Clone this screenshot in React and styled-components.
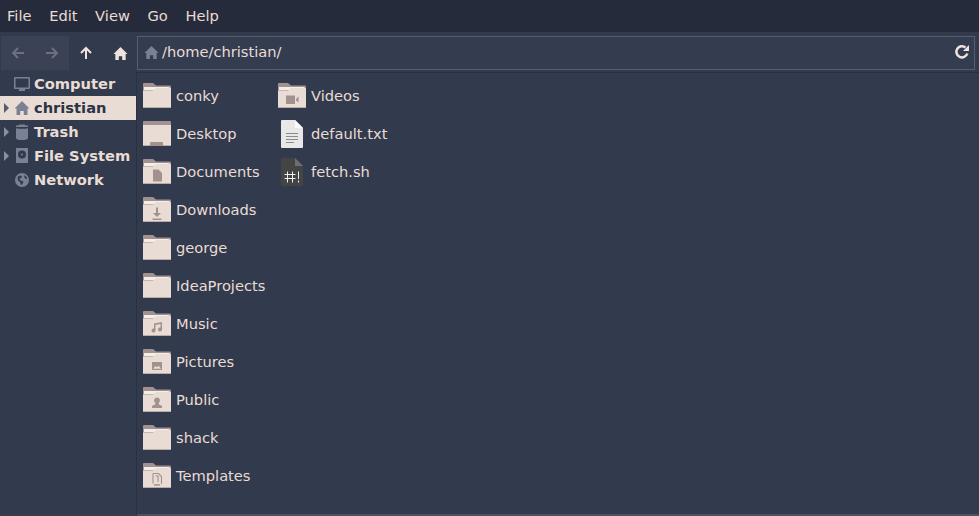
import React from "react";
import styled, { createGlobalStyle } from "styled-components";

const Global = createGlobalStyle`
  html, body { margin: 0; padding: 0; height: 100%; background: #323a4d; overflow: hidden; }
  * { box-sizing: border-box; }
  #root { height: 100%; }
`;

const Window = styled.div`
  width: 979px; height: 516px; display: flex; flex-direction: column;
  background: #323a4d; color: #e9dcd4;
  font-family: "DejaVu Sans", sans-serif; font-size: 14.67px;
`;
const MenuBar = styled.div`
  height: 32px; flex: none; display: flex; align-items: center; padding-left: 7px; gap: 17.6px;
  background: #262b3b; color: #e9dcd4; font-size: 14.67px;
`;
const Label = styled.span` padding-bottom: 2px; `;
const Toolbar = styled.div`
  height: 40px; flex: none; display: flex; align-items: center; padding: 2px 4px 0 1px;
  background: #323a4d;
`;
const NavGroup = styled.div`
  width: 68px; height: 34px; display: flex; align-items: center; background: #3b4256;
`;
const NavButton = styled.div`
  width: 34px; height: 34px; flex: none; display: flex; align-items: center; justify-content: center;
  color: ${p => (p.$dim ? "#6b7180" : "#efe4dd")};
`;
const PathBar = styled.div`
  flex: 1; height: 34px; display: flex; align-items: center; gap: 3px; padding: 0 4px 2px 6px;
  border: 1px solid #565d6e; background: #343c50; font-size: 14.67px;
`;
const PathIcon = styled.div` width: 15px; height: 15px; flex: none; display: flex; color: #7a8194; `;
const PathText = styled(Label)` flex: 1; `;
const Body = styled.div` flex: 1; display: flex; min-height: 0; `;
const Sidebar = styled.div`
  width: 137px; flex: none; border-right: 1px solid #2a3041; border-bottom: 2px solid #3a3c4a; background: #323a4d;
`;
const SideRow = styled.div`
  height: 24px; display: flex; align-items: center; font-weight: 700; font-size: 14.67px; white-space: nowrap;
  background: ${p => (p.$active ? "#e9dcd4" : "transparent")};
  color: ${p => (p.$active ? "#2c3345" : "#e9dcd4")};
`;
const Expander = styled.div` width: 14px; flex: none; display: flex; padding-left: 4px; `;
const Triangle = styled.div`
  width: 0; height: 0; border-left: 5px solid ${p => (p.$active ? "#555c6c" : "#8a8f9c")};
  border-top: 5px solid transparent; border-bottom: 5px solid transparent;
`;
const SideIcon = styled.div`
  width: 16px; height: 16px; flex: none; margin-right: 4px; display: flex; justify-content: center; color: #7a8194;
`;
const Main = styled.div`
  flex: 1; display: grid; grid-template-rows: repeat(11, 38px); grid-auto-flow: column; grid-auto-columns: 135px;
  justify-content: start; padding: 4px 0 0 6px; border-top: 1px solid #2a3041; border-bottom: 2px solid #4a5062;
`;
const FileItem = styled.div` display: flex; align-items: center; gap: 5px; white-space: nowrap; font-size: 14.67px; `;
const IconSlot = styled.div`
  width: 28px; height: 27px; flex: none; display: flex; align-items: center; justify-content: center;
`;

const G = "#a3918f";
const Glyphs = {
  doc: <path d="M10 10.500h5.500l3.500 3.500v8.500h-9z" fill={G} />,
  down: <path d="M13 10.500h2v5.500h3l-4 4-4-4h3zM9.500 21.500h9V23h-9z" fill={G} />,
  music: <path d="M11 12.500l8-1.500v7.500a2 2 0 1 1-1.500-1.900v-3.500l-5 1v5.400a2 2 0 1 1-1.500-1.900z" fill={G} />,
  pic: <path d="M9 13h10v8H9zM10 19.800h8l-2.300-3-1.700 1.500-1.500-1.200z" fill={G} fillRule="evenodd" />,
  pub: <path d="M14 10.500a3 3 0 0 1 1.800 5.400v1.500c1 .4 3.200.8 3.200 2V21H9v-1.600c0-1.200 2.200-1.600 3.200-2v-1.500A3 3 0 0 1 14 10.500z" fill={G} />,
  tpl: <path d="M10 10.500h5.500l3 3v7.500M10 10.500v10M11 21.500l1 .8 1-.8 1 .8 1-.8 1 .8 1-.8M12.500 13h2.500v6" fill="none" stroke={G} strokeWidth="1.100" />,
  vid: <path d="M8 12.500h9v8.500H8zM18 16l2.500-2.500v6l-2.500-2z" fill={G} />,
};

function Folder({ glyph }) {
  return (
    <svg width="28" height="26" viewBox="0 0 28 26">
      <path d="M1 0h9l3 2.500h14a1 1 0 0 1 1 1V8H0V1a1 1 0 0 1 1-1z" fill="#a3918f" />
      <path d="M1 4h25.500v3H1z" fill="#f4eeea" />
      <path d="M0 7.500h10l3-2.500h15V24a1 1 0 0 1-1 1H1a1 1 0 0 1-1-1z" fill="#e9dcd4" />
      <path d="M0 24v.3a.8.8 0 0 0 .8.7h26.400a.8.8 0 0 0 .8-.7V24z" fill="#b9aca6" />
      {glyph && Glyphs[glyph]}
    </svg>
  );
}
function DesktopFolder() {
  return (
    <svg width="28" height="26" viewBox="0 0 28 26">
      <path d="M1 0h26a1 1 0 0 1 1 1v3H0V1a1 1 0 0 1 1-1z" fill="#a3918f" />
      <path d="M0 4h28v20a1 1 0 0 1-1 1H1a1 1 0 0 1-1-1z" fill="#e9dcd4" />
      <path d="M7 25v-3a1 1 0 0 1 1-1h11a1 1 0 0 1 1 1v3z" fill="#a3918f" />
      <path d="M0 24v.3a.8.8 0 0 0 .8.7H7v-1zM20 24h8v.3a.8.8 0 0 1-.8.7H20z" fill="#b9aca6" />
    </svg>
  );
}
function TextFile() {
  return (
    <svg width="22" height="28" viewBox="0 0 22 28">
      <path d="M1 0h13l8 8v19a1 1 0 0 1-1 1H1a1 1 0 0 1-1-1V1a1 1 0 0 1 1-1z" fill="#e8e8e8" />
      <path d="M14 0l8 8h-8z" fill="#fafafa" />
      <path d="M5 13.500h12M5 16.500h12M5 19.500h12M5 22.500h8" stroke="#8a8a8a" strokeWidth="1" />
    </svg>
  );
}
function ScriptFile() {
  return (
    <svg width="22" height="28" viewBox="0 0 22 28">
      <path d="M1 0h13l8 8v19a1 1 0 0 1-1 1H1a1 1 0 0 1-1-1V1a1 1 0 0 1 1-1z" fill="#444444" />
      <path d="M14 0l8 8h-8z" fill="#6e6e6e" />
      <path d="M6.500 13.500v11M11.500 13.500v11M3.500 16.500h11M3.500 20.500h11M17.500 13.500v7.500M17.500 22.500v2" stroke="#f0f0f0" strokeWidth="1" fill="none" />
    </svg>
  );
}

const HomeGlyph = ({ size = 16 }) => (
  <svg width={size} height={size} viewBox="0 0 16 16" fill="currentColor">
    <path d="M8 1L15.500 8.500h-2V15H9.800v-4H6.200v4H2.500V8.500h-2z" />
  </svg>
);
const ArrowLeft = () => (
  <svg width="14" height="14" viewBox="0 0 14 14" fill="none" stroke="currentColor" strokeWidth="2">
    <path d="M13 7H2M7 2L2 7l5 5" />
  </svg>
);
const ArrowRight = () => (
  <svg width="14" height="14" viewBox="0 0 14 14" fill="none" stroke="currentColor" strokeWidth="2">
    <path d="M1 7h11M7 2l5 5-5 5" />
  </svg>
);
const ArrowUp = () => (
  <svg width="14" height="14" viewBox="0 0 14 14" fill="none" stroke="currentColor" strokeWidth="2">
    <path d="M7 13V2M2 7l5-5 5 5" />
  </svg>
);
const Reload = () => (
  <svg width="16" height="16" viewBox="0 0 16 16" fill="none">
    <path d="M13.300 9.500A5.600 5.600 0 1 1 11.500 3.500" stroke="#efe4dd" strokeWidth="2.500" />
    <path d="M9 7L15 1v6z" fill="#efe4dd" />
  </svg>
);
const Monitor = () => (
  <svg width="16" height="16" viewBox="0 0 16 16">
    <path d="M1 1h14a1 1 0 0 1 1 1v10a1 1 0 0 1-1 1h-4v2H5v-2H1a1 1 0 0 1-1-1V2a1 1 0 0 1 1-1zm.5 1.500v9h13v-9z" fill="currentColor" fillRule="evenodd" />
  </svg>
);
const TrashIcon = () => (
  <svg width="14" height="16" viewBox="0 0 14 16" fill="currentColor">
    <path d="M4.500 0.500h5a1 1 0 0 1 1 1H13V3H1V1.500h2.500a1 1 0 0 1 1-1z" />
    <path d="M1 4.200c2 .8 10 .8 12 0v9.300c0 2-2.500 2.500-6 2.500s-6-.5-6-2.500z" />
  </svg>
);
const DiskIcon = () => (
  <svg width="12" height="16" viewBox="0 0 12 16">
    <path d="M0 0h12v15H0zM6 2.500a4 4 0 1 0 0 8 4 4 0 0 0 0-8zM6 5.500a1 1 0 1 1 0 2 1 1 0 0 1 0-2z" fill="currentColor" fillRule="evenodd" />
  </svg>
);
const GlobeIcon = () => (
  <svg width="16" height="16" viewBox="0 0 16 16">
    <circle cx="8" cy="8" r="7" fill="currentColor" />
    <path d="M3.500 5l2.500-1.500 2 .8-1 2-2 .5 2 2 2.500 .5-1 2.700-1.500 1-1-3-2-1.500zM10 3.200l2.300 1.300 1 2.500-2.500-.5z" fill="#323a4d" />
  </svg>
);

const MENU = ["File", "Edit", "View", "Go", "Help"];
const PLACES = [
  { name: "Computer", icon: <Monitor /> },
  { name: "christian", icon: <HomeGlyph />, tri: true, active: true },
  { name: "Trash", icon: <TrashIcon />, tri: true },
  { name: "File System", icon: <DiskIcon />, tri: true },
  { name: "Network", icon: <GlobeIcon /> },
];
const FILES = [
  { name: "conky" },
  { name: "Desktop", kind: "desktop" },
  { name: "Documents", glyph: "doc" },
  { name: "Downloads", glyph: "down" },
  { name: "george" },
  { name: "IdeaProjects" },
  { name: "Music", glyph: "music" },
  { name: "Pictures", glyph: "pic" },
  { name: "Public", glyph: "pub" },
  { name: "shack" },
  { name: "Templates", glyph: "tpl" },
  { name: "Videos", glyph: "vid" },
  { name: "default.txt", kind: "text" },
  { name: "fetch.sh", kind: "script" },
];

function FileIcon({ file }) {
  if (file.kind === "desktop") return <DesktopFolder />;
  if (file.kind === "text") return <TextFile />;
  if (file.kind === "script") return <ScriptFile />;
  return <Folder glyph={file.glyph} />;
}

export default function App() {
  return (
    <Window>
      <Global />
      <MenuBar>
        {MENU.map(m => <Label key={m}>{m}</Label>)}
      </MenuBar>
      <Toolbar>
        <NavGroup>
          <NavButton $dim><ArrowLeft /></NavButton>
          <NavButton $dim><ArrowRight /></NavButton>
        </NavGroup>
        <NavButton><ArrowUp /></NavButton>
        <NavButton><HomeGlyph size={15} /></NavButton>
        <PathBar>
          <PathIcon><HomeGlyph size={15} /></PathIcon>
          <PathText>/home/christian/</PathText>
          <Reload />
        </PathBar>
      </Toolbar>
      <Body>
        <Sidebar>
          {PLACES.map(p => (
            <SideRow key={p.name} $active={p.active}>
              <Expander>{p.tri && <Triangle $active={p.active} />}</Expander>
              <SideIcon>{p.icon}</SideIcon>
              <Label>{p.name}</Label>
            </SideRow>
          ))}
        </Sidebar>
        <Main>
          {FILES.map(f => (
            <FileItem key={f.name}>
              <IconSlot><FileIcon file={f} /></IconSlot>
              <Label>{f.name}</Label>
            </FileItem>
          ))}
        </Main>
      </Body>
    </Window>
  );
}
